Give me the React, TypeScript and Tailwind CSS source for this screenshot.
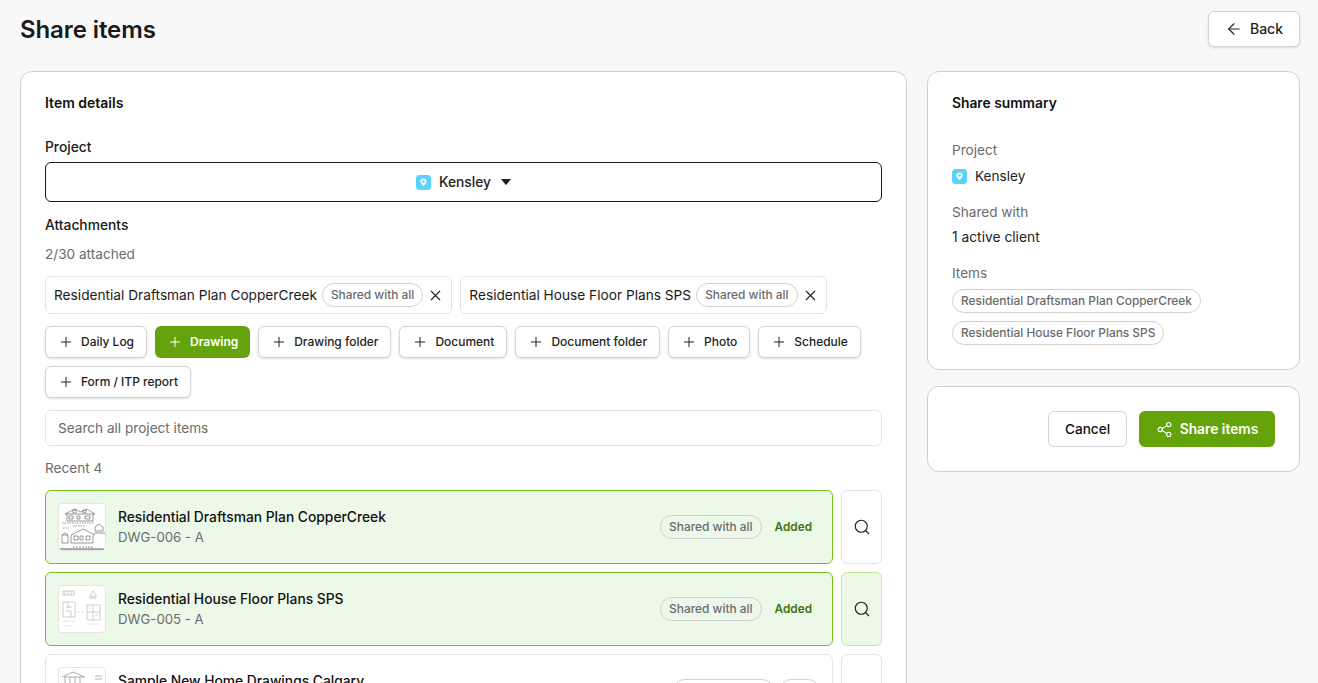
import { ArrowLeft, Plus, Search, Share2, X } from "lucide-react";
import React from "react";

const addButtons = [
  { label: "Daily Log", active: false },
  { label: "Drawing", active: true },
  { label: "Drawing folder", active: false },
  { label: "Document", active: false },
  { label: "Document folder", active: false },
  { label: "Photo", active: false },
  { label: "Schedule", active: false },
  { label: "Form / ITP report", active: false },
];

const Pill = ({ children }: { children: React.ReactNode }) => (
  <span className="flex h-6 items-center whitespace-nowrap rounded-full border border-[#d0d0d0] px-2 text-[11.9px] font-medium text-[#6b6b6b]">
    {children}
  </span>
);

const ProjectIcon = () => (
  <svg width="15" height="15" viewBox="0 0 15 15" className="shrink-0">
    <rect width="15" height="15" rx="3.5" fill="#5ad1ff" />
    <path d="M7.5 3.4a3.2 3.2 0 0 0-3.2 3.2c0 2 3.2 4.6 3.2 4.6s3.2-2.6 3.2-4.6a3.2 3.2 0 0 0-3.2-3.2z" fill="#eefaff" />
    <circle cx="7.5" cy="6.6" r="1.2" fill="#5ad1ff" />
  </svg>
);

const AttachedChip = ({ name }: { name: string }) => (
  <div className="flex h-[38px] items-center rounded-md border border-[#e4e4e4] bg-white pl-2 pr-[7px]">
    <span className="text-[13.7px] text-[#1a1a1a]">{name}</span>
    <span className="ml-[5px]">
      <Pill>Shared with all</Pill>
    </span>
    <X size={17} strokeWidth={1.6} className="ml-[4px] text-[#222]" />
  </div>
);

const ThumbA = () => (
  <svg viewBox="0 0 46 46" className="h-full w-full" fill="none" stroke="#6f6f6f" strokeWidth="0.7">
    <path d="M6 10l10-5 6 3 6-3 8 5M6 10h30M8 10v7h26v-7" />
    <path d="M10 12h4v3h-4zM18 12h3v3h-3zM26 12h5v3h-5zM14 6h3v3h-3zM24 6h3v3h-3z" />
    <path d="M3 19h32M14 22h12M4 24h6" strokeDasharray="1.5 1" />
    <path d="M36 23l4-3 4 3v4h-8zM35 29h11" />
    <path d="M12 31l12-6 12 6M12 31v8h22v-8" />
    <path d="M15 32h4v4h-4zM21 32h3v4h-3zM27 32h4v4h-4zM3 31v8h6v-8zM3 31l3-2 3 2" />
    <path d="M14 43h20" strokeDasharray="2 1" />
    <path d="M1 45h44" stroke="#555" strokeWidth="1" />
  </svg>
);

const ThumbB = () => (
  <svg viewBox="0 0 46 46" className="h-full w-full" fill="none" stroke="#9c9c9c" strokeWidth="0.5">
    <path d="M4 5h11v4H4zM6 5v4M9 5v4M12 5v4M31 9l3-4 3 4v3h-6zM33 9v3M35 9v3" />
    <path d="M4 16h12v15H4zM7 21h6M7 25h5M9 16v6M12 25v6M28 19h13v15H28zM34 19v15M28 26h13M30 22h2M36 29h3" />
    <path d="M17 26h9" strokeDasharray="1.5 1.5" />
    <path d="M3 35h14M6 40h8M27 38h14" strokeDasharray="1 1" />
  </svg>
);

const ThumbC = () => (
  <svg viewBox="0 0 46 46" className="h-full w-full" fill="none" stroke="#777" strokeWidth="0.6">
    <path d="M3 9l11-5 12 5M5 9h20M6 9v12M11 9v12M16 9v12M21 9v12M36 8h7M36 11h7" />
  </svg>
);

const ItemRow = ({
  title,
  code,
  added,
  tinted,
  thumb,
}: {
  title: string;
  code: string;
  added: boolean;
  tinted: boolean;
  thumb: React.ReactNode;
}) => (
  <div className="flex gap-2">
    <div
      className={`flex h-[74px] min-w-0 flex-1 items-center rounded-md border pl-3 pr-3 ${
        added ? "border-[#77bc1f] bg-[#ecf8e8]" : "border-[#e4e4e4] bg-white"
      }`}
    >
      <div className="size-[48px] shrink-0 overflow-hidden rounded-[4px] border border-[#e4e4e4] bg-white">
        {thumb}
      </div>
      <div className="ml-3 min-w-0 flex-1">
        <div className="text-[13.8px] font-medium leading-5 text-[#111]">{title}</div>
        <div className="text-[13.2px] leading-5 text-[#6b6b6b]">{code}</div>
      </div>
      <Pill>Shared with all</Pill>
      {added ? (
        <span className="ml-[13px] mr-2 mt-px text-[11.8px] font-semibold text-[#44730f]">Added</span>
      ) : (
        <span className="ml-[5px]">
          <Pill>Add</Pill>
        </span>
      )}
    </div>
    <button
      className={`flex h-[74px] w-[41px] shrink-0 items-center justify-center rounded-md border ${
        tinted ? "border-[#c3ee8f] bg-[#ecf8e8]" : "border-[#e4e4e4] bg-white"
      }`}
    >
      <Search size={18} strokeWidth={1.5} className="text-[#222]" />
    </button>
  </div>
);

export default function App() {
  return (
    <div
      className="h-screen overflow-hidden bg-[#f8f8f8] pl-5 pr-[18px] pt-[11px] text-[#111]"
      style={{ fontFamily: "Inter, 'Noto Sans', sans-serif" }}
    >
      {/* header */}
      <div className="flex h-9 items-center justify-between">
        <h1 className="pt-0.5 text-2xl font-semibold tracking-[-0.1px] text-[#1a1a1a]">Share items</h1>
        <button className="flex h-9 w-[92px] items-center justify-center gap-[7px] rounded-md border border-[#d4d4d4] bg-white text-sm font-medium text-[#222] shadow-sm">
          <ArrowLeft size={18} strokeWidth={1.5} />
          Back
        </button>
      </div>

      <div className="mt-6 flex items-start gap-5">
        {/* item details */}
        <div className="h-[700px] min-w-0 flex-1 rounded-xl border border-[#cfcfcf] bg-white px-6 pt-[23px]">
          <h2 className="text-sm font-semibold leading-4 text-[#111]">Item details</h2>

          <div className="mt-[26px] text-[13.8px] font-medium leading-5 text-[#1a1a1a]">Project</div>
          <button className="mt-[5px] flex h-10 w-full items-center justify-center rounded-md border border-[#1a1a1a] bg-white">
            <ProjectIcon />
            <span className="ml-2 text-[13.8px] font-medium text-[#222]">Kensley</span>
            <svg width="10" height="6" viewBox="0 0 10 6" className="ml-[10px]">
              <path d="M0 0h10L5.6 5.4a.8.8 0 0 1-1.2 0z" fill="#222" />
            </svg>
          </button>

          <div className="mt-[13px] text-[13.8px] font-medium leading-5 text-[#1a1a1a]">Attachments</div>
          <div className="mt-[9px] text-[13.6px] leading-5 text-[#6b6b6b]">2/30 attached</div>

          <div className="mt-3 flex gap-2">
            <AttachedChip name="Residential Draftsman Plan CopperCreek" />
            <AttachedChip name="Residential House Floor Plans SPS" />
          </div>

          <div className="mt-3 flex flex-wrap gap-x-2 gap-y-2">
            {addButtons.map((b) => (
              <button
                key={b.label}
                className={
                  b.active
                    ? "flex h-8 items-center gap-[7px] rounded-md bg-[#65a30d] px-3 text-[11.97px] font-semibold text-white"
                    : "flex h-8 items-center gap-[7px] rounded-md border border-[#d4d4d4] bg-white px-3 text-[11.97px] font-medium text-[#222] shadow-sm"
                }
              >
                <Plus size={16} strokeWidth={1.5} />
                {b.label}
              </button>
            ))}
          </div>

          <input
            readOnly
            placeholder="Search all project items"
            className="mt-3 h-9 w-full rounded-md border border-[#e4e4e4] bg-white px-3 text-[13.6px] outline-none placeholder:text-[#6b6b6b]"
          />

          <div className="mt-3 text-[13.6px] leading-5 text-[#6b6b6b]">Recent 4</div>

          <div className="mt-3 flex flex-col gap-2">
            <ItemRow title="Residential Draftsman Plan CopperCreek" code="DWG-006 - A" added tinted={false} thumb={<ThumbA />} />
            <ItemRow title="Residential House Floor Plans SPS" code="DWG-005 - A" added tinted thumb={<ThumbB />} />
            <ItemRow title="Sample New Home Drawings Calgary" code="DWG-004 - A" added={false} tinted={false} thumb={<ThumbC />} />
          </div>
        </div>

        {/* summary */}
        <div className="flex w-[373px] shrink-0 flex-col gap-4">
          <div className="h-[299px] rounded-xl border border-[#cfcfcf] bg-white px-6 pt-[23px]">
            <h2 className="text-[13.8px] font-semibold leading-4 text-[#111]">Share summary</h2>

            <div className="mt-[29px] text-[13.6px] leading-5 text-[#6b6b6b]">Project</div>
            <div className="mt-[6px] flex items-center gap-2">
              <ProjectIcon />
              <span className="text-[13.6px] leading-5 text-[#222]">Kensley</span>
            </div>

            <div className="mt-[16px] text-[13.6px] leading-5 text-[#6b6b6b]">Shared with</div>
            <div className="mt-[5px] text-[13.8px] leading-5 text-[#222]">1 active client</div>

            <div className="mt-[16px] text-[13.6px] leading-5 text-[#6b6b6b]">Items</div>
            <div className="mt-[6px] flex flex-col items-start gap-2">
              <Pill>Residential Draftsman Plan CopperCreek</Pill>
              <Pill>Residential House Floor Plans SPS</Pill>
            </div>
          </div>

          <div className="flex h-[86px] items-center justify-end gap-3 rounded-xl border border-[#cfcfcf] bg-white px-6">
            <button className="h-9 w-[79px] rounded-md border border-[#d4d4d4] bg-white text-[13.6px] font-medium text-[#111]">
              Cancel
            </button>
            <button className="flex h-9 w-[136px] items-center justify-center gap-[7px] rounded-md bg-[#65a30d] text-[13.8px] font-semibold text-white">
              <Share2 size={17} strokeWidth={1.5} />
              Share items
            </button>
          </div>
        </div>
      </div>
    </div>
  );
}
